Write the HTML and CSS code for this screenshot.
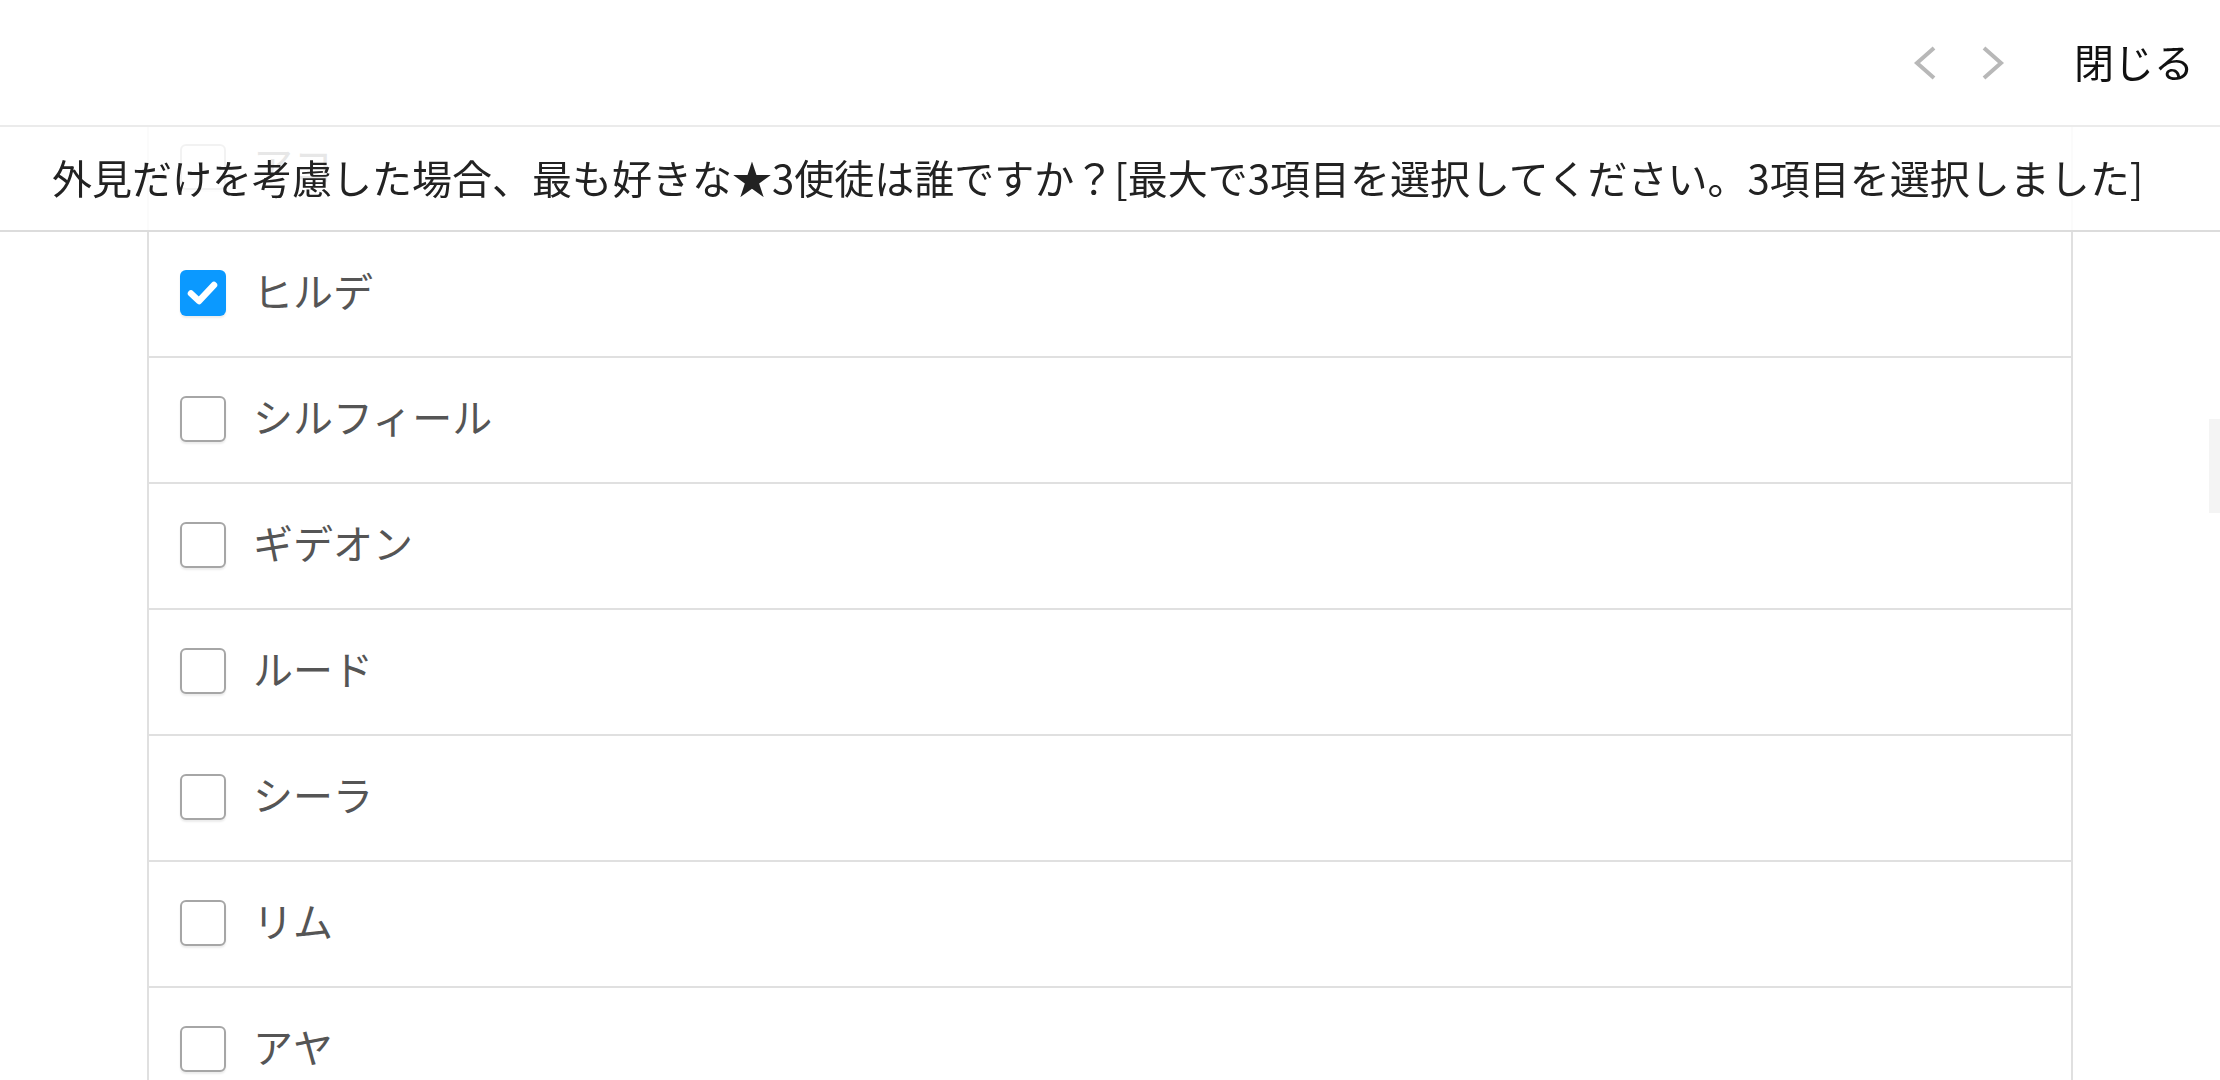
FILE: index.html
```html
<!DOCTYPE html>
<html lang="ja">
<head>
<meta charset="utf-8">
<title>アンケート</title>
<link rel="stylesheet" href="styles.css">
</head>
<body>
<header class="topbar">
  <button class="nav-btn" aria-label="前へ">
    <svg width="24" height="36" viewBox="0 0 24 36"><path d="M21 3 L4 18 L21 33" fill="none" stroke="#b8b8b8" stroke-width="4" stroke-linecap="butt" stroke-linejoin="miter"/></svg>
  </button>
  <button class="nav-btn" aria-label="次へ">
    <svg width="24" height="36" viewBox="0 0 24 36"><path d="M3 3 L20 18 L3 33" fill="none" stroke="#b8b8b8" stroke-width="4" stroke-linecap="butt" stroke-linejoin="miter"/></svg>
  </button>
  <span class="close">閉じる</span>
</header>
<div class="question">外見だけを考慮した場合、最も好きな★3使徒は誰ですか？[最大で3項目を選択してください。3項目を選択しました]</div>
<main class="content">
  <ul class="list">
    <li class="row"><span class="box"></span><span class="label">アコ</span></li>
    <li class="row"><span class="box checked"><svg width="46" height="46" viewBox="0 0 46 46"><path d="M11 23.5 L19 31 L34 15" fill="none" stroke="#fff" stroke-width="6.5" stroke-linecap="round" stroke-linejoin="round"/></svg></span><span class="label">ヒルデ</span></li>
    <li class="row"><span class="box"></span><span class="label">シルフィール</span></li>
    <li class="row"><span class="box"></span><span class="label">ギデオン</span></li>
    <li class="row"><span class="box"></span><span class="label">ルード</span></li>
    <li class="row"><span class="box"></span><span class="label">シーラ</span></li>
    <li class="row"><span class="box"></span><span class="label">リム</span></li>
    <li class="row"><span class="box"></span><span class="label">アヤ</span></li>
    <li class="row"><span class="box"></span><span class="label">ミカ</span></li>
  </ul>
</main>
<div class="scroll-thumb"></div>
</body>
</html>
```
FILE: styles.css
```css
html, body {
  margin: 0;
  padding: 0;
  height: 1080px;
  overflow: hidden;
  background: #fff;
  font-family: "Noto Sans CJK JP", "Noto Sans", sans-serif;
}

.topbar {
  position: fixed;
  top: 0;
  left: 0;
  right: 0;
  height: 125px;
  background: #fff;
  border-bottom: 2px solid #ebebeb;
  display: flex;
  align-items: center;
  justify-content: flex-end;
  padding-right: 26px;
  z-index: 3;
}

.nav-btn {
  background: none;
  border: none;
  padding: 0;
  margin: 0;
  width: 24px;
  height: 36px;
  display: flex;
  align-items: center;
  justify-content: center;
}

.nav-btn + .nav-btn {
  margin-left: 44px;
}

.close {
  margin-left: 69px;
  font-size: 40px;
  color: #111;
  line-height: 1;
  position: relative;
  top: -2px;
}

.question {
  position: fixed;
  top: 127px;
  left: 0;
  right: 0;
  height: 103px;
  background: rgba(255, 255, 255, 0.86);
  border-bottom: 2px solid #dcdcdc;
  display: flex;
  align-items: center;
  padding-left: 52px;
  padding-bottom: 3px;
  box-sizing: border-box;
  height: 105px;
  font-size: 40px;
  color: #222;
  white-space: nowrap;
  z-index: 2;
}

.content {
  padding-top: 106px;
}

.list {
  list-style: none;
  margin: 0 0 0 147px;
  padding: 0;
  width: 1926px;
  box-sizing: border-box;
  border-left: 2px solid #e0e0e0;
  border-right: 2px solid #e0e0e0;
}

.row {
  height: 124px;
  border-bottom: 2px solid #e0e0e0;
  display: flex;
  align-items: center;
  padding-left: 31px;
}

.box {
  width: 46px;
  height: 46px;
  box-sizing: border-box;
  border: 2px solid #a6a6a6;
  border-radius: 6px;
  background: #fff;
  box-shadow: 0 2px 2px rgba(0, 0, 0, 0.08);
  flex: none;
  display: block;
  position: relative;
  top: -1px;
}

.box.checked {
  border: none;
  background: #0b99ff;
}

.box svg {
  display: block;
}

.label {
  margin-left: 27px;
  font-size: 40px;
  color: #555;
  line-height: 1;
  position: relative;
  top: -4px;
}

.scroll-thumb {
  position: fixed;
  right: 0;
  top: 419px;
  width: 11px;
  height: 94px;
  background: #f4f4f4;
}
```
